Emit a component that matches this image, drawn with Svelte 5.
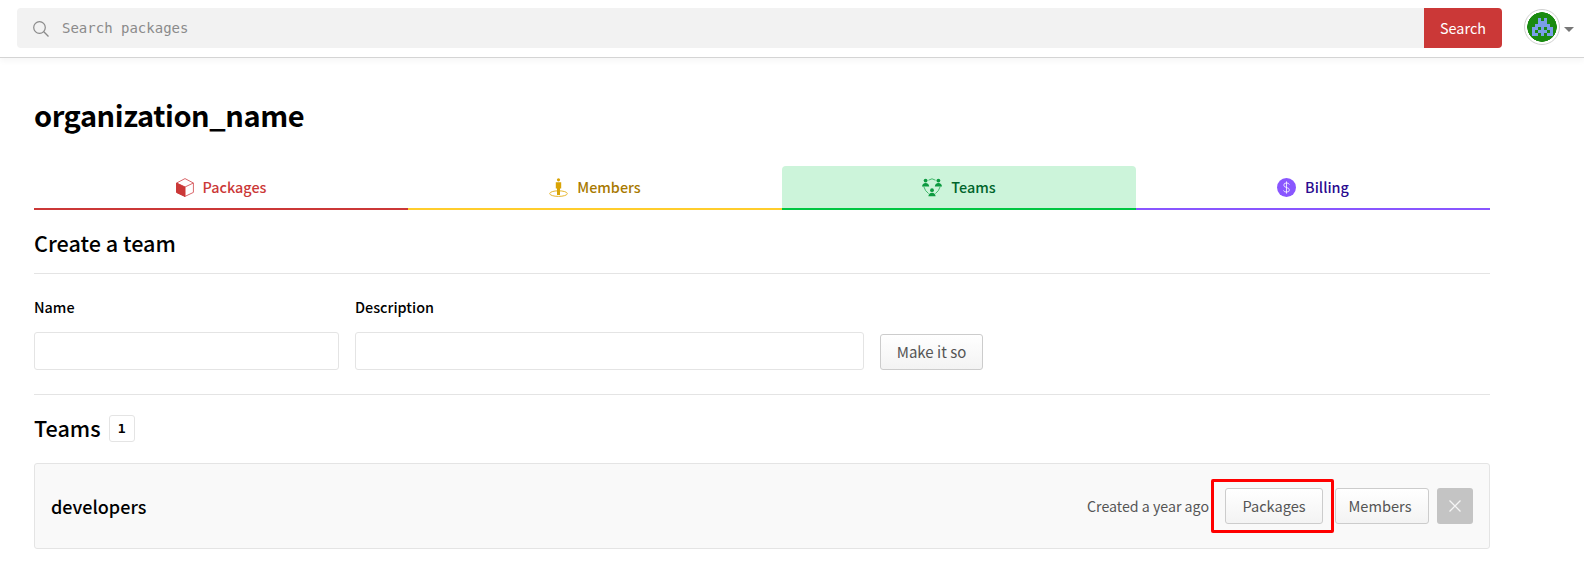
<script lang="ts">
  const tabs = [
    { id: 'packages', label: 'Packages' },
    { id: 'members', label: 'Members' },
    { id: 'teams', label: 'Teams' },
    { id: 'billing', label: 'Billing' }
  ];

  // retro avatar pixels, 7 x 6 grid
  const invader = [
    '..#.#..',
    '..###..',
    '.#####.',
    '##.#.##',
    '#.###.#',
    '##.#.##'
  ];
</script>

<header class="topbar">
  <form class="search">
    <span class="search-field">
      <svg class="search-icon" viewBox="0 0 18 18" width="18" height="18" aria-hidden="true">
        <circle cx="7.5" cy="7.5" r="5.8" fill="none" stroke="#8a8a8a" stroke-width="1.2" />
        <path d="M11.8 11.8 16.5 16.5" stroke="#8a8a8a" stroke-width="1.3" fill="none" />
      </svg>
      <input class="search-input" type="search" placeholder="Search packages" />
    </span>
    <button class="search-btn" type="button">Search</button>
  </form>
  <div class="profile">
    <span class="avatar">
      <svg viewBox="0 0 7 6" width="21" height="18" shape-rendering="crispEdges" aria-hidden="true">
        {#each invader as row, y}
          {#each row.split('') as cell, x}
            {#if cell === '#'}
              <rect {x} {y} width="1" height="1" fill="#7a9ee8" />
            {/if}
          {/each}
        {/each}
      </svg>
    </span>
    <span class="caret"></span>
  </div>
</header>

<main class="page">
  <h1 class="org-name">organization_name</h1>

  <nav class="tabs">
    {#each tabs as tab}
      <a class="tab {tab.id}" href="#{tab.id}">
        {#if tab.id === 'packages'}
          <svg viewBox="0 0 18 19" width="18" height="19" aria-hidden="true">
            <path d="M9 .6 17.4 5v9.4L9 18.4.6 14.4V5Z" fill="#fff" stroke="#d9666a" stroke-width="1" />
            <path d="M.6 5 9 9v9.4L.6 14.4Z" fill="#cb3837" stroke="#cb3837" stroke-width="1" />
            <path d="M9 9 17.4 5" stroke="#d9666a" stroke-width="1" />
          </svg>
        {:else if tab.id === 'members'}
          <svg viewBox="0 0 19 19" width="19" height="19" aria-hidden="true">
            <ellipse cx="9.5" cy="15.6" rx="8.8" ry="2.8" fill="none" stroke="#e5b62e" stroke-width="1" />
            <circle cx="9.5" cy="1.8" r="1.6" fill="#d9a406" />
            <path d="M6.8 4.2h5.4v6.2h-1.2V17H8v-6.6H6.8Z" fill="#d9a406" />
          </svg>
        {:else if tab.id === 'teams'}
          <svg viewBox="0 0 20 19" width="20" height="19" aria-hidden="true">
            <path d="M6.5 2.2Q10-.6 13.5 2.2M1.8 8.6Q3 13 6.6 15.6M18.2 8.6Q17 13 13.4 15.6" fill="none" stroke="#1fa84f" stroke-width=".8" />
            <g fill="#0c9a40">
              <circle cx="3.6" cy="2.6" r="1.9" /><path d="M0 8.5Q.4 5 3.6 5T7.2 8.5Z" />
              <circle cx="16.4" cy="2.6" r="1.9" /><path d="M12.8 8.5Q13.2 5 16.4 5T20 8.5Z" />
              <circle cx="10" cy="12.2" r="1.9" /><path d="M6.4 18.2Q6.8 14.7 10 14.7T13.6 18.2Z" />
            </g>
          </svg>
        {:else}
          <svg viewBox="0 0 19 19" width="19" height="19" aria-hidden="true">
            <circle cx="9.5" cy="9.5" r="9.5" fill="#8956ff" />
            <path d="M12.4 6.6Q11.7 4.9 9.5 4.9 6.8 4.9 6.8 7.1 6.8 8.9 9.5 9.5 12.4 10.1 12.4 12 12.4 14.1 9.5 14.1 7 14.1 6.5 12.4M9.5 3.4v12.2" fill="none" stroke="#fff" stroke-width=".8" />
          </svg>
        {/if}
        <span class="tab-label">{tab.label}</span>
      </a>
    {/each}
  </nav>

  <section class="create">
    <h2 class="section-title create-title">Create a team</h2>
    <form class="create-form">
      <label class="field name-field">
        <span class="field-label">Name</span>
        <input type="text" />
      </label>
      <label class="field desc-field">
        <span class="field-label">Description</span>
        <input type="text" />
      </label>
      <button class="btn make" type="button">Make it so</button>
    </form>
  </section>

  <section class="teams">
    <h2 class="section-title teams-title">Teams <span class="count">1</span></h2>
    <div class="team-row">
      <strong class="team-name">developers</strong>
      <div class="team-actions">
        <span class="created">Created a year ago</span>
        <button class="btn packages-btn" type="button">Packages</button>
        <button class="btn members-btn" type="button">Members</button>
        <button class="delete" type="button" aria-label="Delete">
          <svg viewBox="0 0 14 14" width="14" height="14" aria-hidden="true">
            <path d="M1.5 1.5 12.5 12.5M12.5 1.5 1.5 12.5" stroke="#fff" stroke-width="1.3" opacity=".85" />
          </svg>
        </button>
      </div>
    </div>
  </section>
</main>

<style>
  :global(body) {
    font-family: "Noto Sans CJK SC", "Source Sans Pro", "Noto Sans", sans-serif;
    color: #000;
    background: #fff;
  }

  .topbar {
    display: flex;
    align-items: center;
    height: 58px;
    padding: 0 10px 0 17px;
    box-sizing: border-box;
    border-bottom: 1px solid #d4d4d4;
    box-shadow: 0 3px 6px rgba(0, 0, 0, 0.04);
  }

  .search {
    display: flex;
    width: 1485px;
    height: 40px;
    margin-top: -2px;
  }

  .search-field {
    flex: 1;
    display: flex;
    align-items: center;
    padding-left: 15px;
    background: #f2f2f2;
    border-radius: 4px 0 0 4px;
  }

  .search-icon {
    flex: none;
    margin-top: 2px;
  }

  .search-input {
    flex: 1;
    margin-left: 12px;
    padding: 0;
    border: 0;
    outline: 0;
    background: transparent;
    font: 14px "DejaVu Sans Mono", monospace;
  }

  .search-input::placeholder {
    color: #8b8b8b;
  }

  .search-btn {
    width: 78px;
    border: 0;
    border-radius: 0 4px 4px 0;
    background: #cb3837;
    color: #fff;
    font-family: inherit;
    font-size: 14.4px;
  }

  .profile {
    display: flex;
    align-items: center;
    margin-left: 22px;
    margin-top: -3px;
  }

  .avatar {
    display: flex;
    align-items: center;
    justify-content: center;
    width: 36px;
    height: 36px;
    box-sizing: border-box;
    border: 1px solid #d0d0d0;
    border-radius: 50%;
    background: #fff;
    background-image: radial-gradient(circle, #1a8a10 14.5px, transparent 15px);
  }

  .caret {
    margin: 4px 0 0 4px;
    border-top: 5px solid #777;
    border-left: 5px solid transparent;
    border-right: 5px solid transparent;
  }

  .page {
    padding: 0 94px 0 34px;
  }

  .org-name {
    margin: 0;
    padding-top: 36px;
    font-size: 29px;
    line-height: 40px;
    font-weight: 700;
    letter-spacing: -0.42px;
  }

  .tabs {
    display: grid;
    grid-template-columns: 374fr 374fr 354fr 354fr;
    margin-top: 32px;
  }

  .tab {
    display: flex;
    align-items: center;
    justify-content: center;
    gap: 9px;
    height: 42px;
    font-size: 14.4px;
    font-weight: 500;
    text-decoration: none;
    border-bottom: 2px solid;
  }

  .tab svg {
    display: block;
  }

  .tab-label {
    margin-bottom: 2px;
  }

  .tab.packages {
    color: #cb3837;
    border-color: #cb3837;
  }

  .tab.members {
    color: #a87900;
    border-color: #ffcd2c;
  }

  .tab.teams {
    color: #00642b;
    background: #ccf4da;
    border-color: #00c642;
    border-radius: 4px 4px 0 0;
  }

  .tab.billing {
    color: #2a0a8f;
    border-color: #8956ff;
  }

  .section-title {
    margin: 0;
    font-size: 21.6px;
    line-height: 30px;
    font-weight: 500;
  }

  .create-title {
    padding: 18px 0 15px;
    border-bottom: 1px solid #e4e4e4;
  }

  .create-form {
    display: flex;
    align-items: flex-end;
    padding: 23px 0 24px;
    border-bottom: 1px solid #e4e4e4;
  }

  .field {
    display: flex;
    flex-direction: column;
    gap: 15px;
  }

  .field-label {
    font-size: 14.4px;
    line-height: 20px;
    font-weight: 500;
  }

  .field input {
    height: 38px;
    box-sizing: border-box;
    border: 1px solid #e4e4e4;
    border-radius: 3px;
    outline: 0;
  }

  .name-field input {
    width: 305px;
  }

  .desc-field {
    margin-left: 16px;
  }

  .desc-field input {
    width: 509px;
  }

  .btn {
    height: 36px;
    box-sizing: border-box;
    border: 1px solid #ccc;
    border-radius: 3px;
    background: linear-gradient(#fff, #f3f3f3);
    color: #555;
    font-family: inherit;
    font-size: 14.6px;
    padding: 0 0 2px;
  }

  .make {
    width: 103px;
    margin-left: 16px;
    font-size: 15px;
  }

  .teams-title {
    display: flex;
    align-items: center;
    gap: 8px;
    padding-top: 18px;
  }

  .count {
    display: flex;
    align-items: center;
    justify-content: center;
    width: 26px;
    height: 27px;
    box-sizing: border-box;
    border: 1px solid #e4e4e4;
    border-radius: 3px;
    font: 700 13px "DejaVu Sans Mono", monospace;
  }

  .team-row {
    display: flex;
    align-items: center;
    justify-content: space-between;
    height: 86px;
    box-sizing: border-box;
    margin-top: 20px;
    padding: 0 16px;
    background: #f9f9f9;
    border: 1px solid #e4e4e4;
    border-radius: 3px;
  }

  .team-name {
    font-size: 18px;
    font-weight: 500;
  }

  .team-actions {
    display: flex;
    align-items: center;
  }

  .created {
    font-size: 14.2px;
    color: #555;
    margin-left: -1px;
  }

  .packages-btn {
    position: relative;
    width: 98px;
    margin-left: 16px;
  }

  /* red annotation box from the screenshot */
  .packages-btn::after {
    content: "";
    position: absolute;
    z-index: 1;
    top: -10px;
    bottom: -10px;
    left: -15px;
    right: -12px;
    border: 3px solid #f00;
    border-radius: 2px;
  }

  .members-btn {
    width: 94px;
    margin-left: 12px;
    padding-right: 4px;
  }

  .delete {
    display: flex;
    align-items: center;
    justify-content: center;
    width: 36px;
    height: 36px;
    margin-left: 8px;
    padding: 0;
    border: 0;
    border-radius: 3px;
    background: #c4c4c4;
  }
</style>
